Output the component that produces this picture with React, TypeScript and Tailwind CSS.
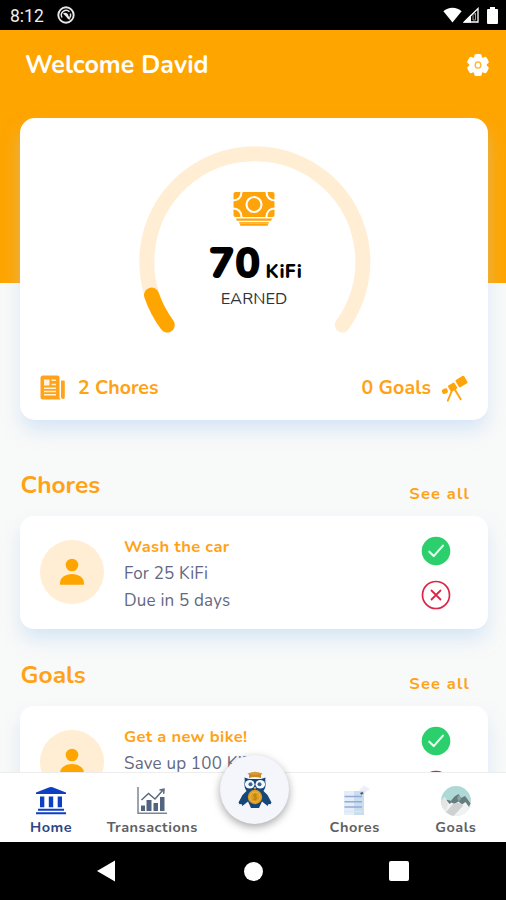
import React from "react";

const CARD_SHADOW = "shadow-[0_11px_18px_-2px_rgba(178,212,244,0.5)]";

function WifiIcon() {
  return (
    <svg width="19" height="16" viewBox="0 0 19 16" fill="#fff">
      <path d="M9.5 15.6 0.4 4.3C2.8 2 6 .8 9.5.8s6.700 1.200 9.100 3.500z" />
    </svg>
  );
}

function SignalIcon() {
  return (
    <svg width="16" height="16" viewBox="0 0 16 16">
      <path d="M1.500 15H15V1.500z" fill="none" stroke="#fff" strokeWidth="1.300" />
      <path d="M0 15.600 8 7.600v8z" fill="#fff" />
      <path d="M10 13V8.500l2.500-2.500v7z" fill="none" stroke="#999" strokeWidth="1" />
    </svg>
  );
}

function BatteryIcon() {
  return (
    <svg width="11" height="17" viewBox="0 0 11 17" fill="#fff">
      <path d="M3 0h5v2h2q1 0 1 1v13q0 1-1 1H1q-1 0-1-1V3q0-1 1-1h2z" />
    </svg>
  );
}

function StatusMark() {
  return (
    <svg width="18" height="18" viewBox="0 0 18 18" fill="none">
      <circle cx="9" cy="9" r="7.700" stroke="#e8e8e8" strokeWidth="1.900" />
      <path d="M5 11.500a4.800 4.800 0 0 1 7.500-5.800M13.400 7.500a4.800 4.800 0 0 1-.8 4.500" stroke="#e8e8e8" strokeWidth="1.500" />
      <path d="M6 7.500c2-1.500 5-.5 5.500 2.500l2 3.500c-3 .5-3.500-2-4.500-3z" fill="#e8e8e8" />
    </svg>
  );
}

function GearIcon() {
  return (
    <svg width="24" height="24" viewBox="0 0 24 24">
      <g fill="#fff">
        <circle cx="12" cy="12" r="8.800" />
        {[0, 60, 120].map((a) => (
          <rect key={a} x="8.200" y="0.900" width="7.600" height="22.200" rx="2.200" transform={`rotate(${a} 12 12)`} />
        ))}
      </g>
      <ellipse cx="12" cy="12" rx="2.800" ry="3.200" fill="none" stroke="#ffb12b" strokeWidth="1.300" />
    </svg>
  );
}

function MoneyIcon() {
  return (
    <svg width="42" height="34" viewBox="0 0 42 34">
      <rect x="0.500" y="0" width="41" height="25" rx="2" fill="#ffa30a" />
      <g fill="none" stroke="#fff" strokeWidth="2.100">
        <circle cx="21" cy="12.500" r="7.500" />
        <path d="M0 8.500c5 0 8.500-3 8.500-8.500M33.500 0c0 5.500 3.500 8.500 8.500 8.500M0 16.500c5 0 8.500 3 8.500 8.500M33.500 25c0-5.500 3.500-8.500 8.500-8.500" />
      </g>
      <path d="M3 26.500h36l-.8 2.200H3.800zM6 30h30l-1.500 3.800h-27z" fill="#ffa30a" />
      <path d="M6 31.100h30" stroke="#ffdc9e" strokeWidth=".7" />
    </svg>
  );
}

function NewsIcon() {
  return (
    <svg width="26" height="26" viewBox="0 0 26 26">
      <path d="M3 .5h14.500q2 0 2 2V22q0 2 1.500 2.500H3q-2.500 0-2.500-2.500V3Q.5.5 3 .5z" fill="#ffa31a" />
      <path d="M21 5.500h2.500q1.300 0 1.300 1.300V22q0 2-1.900 2T21 22z" fill="#ffa31a" />
      <rect x="4" y="4.500" width="5.500" height="6" fill="#fff3df" />
      <path d="M11.500 5.300h4.500M11.500 9.500h4.500M4 13.300h12M4 16.500h12M4 19.800h12" stroke="#fff0d6" strokeWidth="1.400" />
    </svg>
  );
}

function TelescopeIcon() {
  return (
    <svg width="27" height="27" viewBox="0 0 27 27">
      <g fill="#ffa30a">
        <rect x="15.500" y="2.300" width="10" height="8.600" rx="1.500" transform="rotate(-31 20.500 6.600)" />
        <rect x="7.800" y="8.600" width="7.500" height="7" rx="1" transform="rotate(-31 11.500 12.100)" />
        <rect x="1" y="13.700" width="5.800" height="5" rx="2" transform="rotate(-20 3.900 16.200)" />
      </g>
      <path d="M11 15.500 6.800 25.700M13.800 14.500l5.900 9.700" stroke="#ffa30a" strokeWidth="1.900" strokeLinecap="round" />
    </svg>
  );
}

function PersonIcon() {
  return (
    <svg width="26" height="28" viewBox="0 0 26 28" fill="#ffa500">
      <circle cx="13" cy="7" r="6.300" />
      <path d="M1 26.700v-1.500C1 19.500 6.500 16 13 16s12 3.500 12 9.200v1.500z" />
    </svg>
  );
}

function CheckBadge() {
  return (
    <svg width="30" height="30" viewBox="0 0 30 30" fill="none">
      <circle cx="15" cy="15" r="14.300" fill="#2bd06c" />
      <path d="m8.300 15.700 4.400 4.400 9.300-10.500" stroke="#effff5" strokeWidth="2.100" strokeLinecap="round" strokeLinejoin="round" />
    </svg>
  );
}

function CrossBadge() {
  return (
    <svg width="30" height="30" viewBox="0 0 30 30" fill="none" stroke="#dc2648" strokeLinecap="round">
      <circle cx="15" cy="15" r="13.500" strokeWidth="1.700" />
      <path d="m10.500 10.500 9 9m0-9-9 9" strokeWidth="1.800" />
    </svg>
  );
}

function BankIcon() {
  return (
    <svg width="32" height="30" viewBox="0 0 32 30" fill="#0c3fc4">
      <path d="M1 8V6.500L14.500 1.300q1.500-.5 3 0L31 6.500V8z" />
      <path d="M5 10.500h4.300v10.800H5zM13.800 10.500h4.400v10.800h-4.400zM22.700 10.500H27v10.800h-4.300z" />
      <path d="M3 22.800h26v2H3zM1 26.300h30v2H1z" />
    </svg>
  );
}

function ChartIcon() {
  return (
    <svg width="32" height="30" viewBox="0 0 32 30">
      <path d="M2 1v26.200h29" fill="none" stroke="#7b8797" strokeWidth="1.500" />
      <path d="M5 19.500h4v5.500H5zM10.500 14h5v11h-5zM17.500 17H22v8h-4.500zM24 11h4.500v14H24z" fill="#53657e" />
      <path d="m5.500 14 7-6.500 6.500 5.500 8-9M23.500 4l4.500-.8-.3 4.600" fill="none" stroke="#5a6a80" strokeWidth="1.500" />
    </svg>
  );
}

function DocIcon() {
  return (
    <svg width="32" height="32" viewBox="0 0 32 32">
      <path d="m20 5 5-4.500L31 4l-8 6z" fill="#eceffa" />
      <path d="M5 6h10v24H5z" fill="#e4eef8" />
      <path d="M15 6h10v24H15z" fill="#c9ddec" />
      <path d="M5.500 11.500H23M5.500 16.800H23M5.500 22H23" stroke="#94aadc" strokeWidth="1.500" />
      <path d="M5.500 26.500h18" stroke="#dbe6f2" strokeWidth="1.300" />
      <path d="m21 8 2.500-1 1 1.500-2.300 1.300z" fill="#435568" />
    </svg>
  );
}

function MountainIcon() {
  return (
    <svg width="32" height="32" viewBox="0 0 32 32">
      <circle cx="16" cy="16" r="15" fill="#afd9d6" />
      <path d="M1.300 18 4 12l5 4 5-1 3-1 9-1 4.800 4A15 15 0 0 1 16 31C9 31 3 26 1.300 18z" fill="#f1f2f2" />
      <path d="m6 14.500 5 1.200 3.500-4.200 4-2.500 2.500 4 4-2 5.500 7-1.500 4-3.500-5-3.500 2.500-3.500-3-4 2.500-3-1.500-2 1.500z" fill="#647d7f" />
      <path d="m17 13 2.200-3.500L21 14l-2 2.500z" fill="#8fa2a3" />
      <path d="m13 19 4-1.500 5 1.500 1 2-9.500 10q-4-.8-7.500-4z" fill="#cfd0d3" />
      <path d="M1.500 15 5 12.500 8 19l-2 6.500q-5-4.500-4.500-10.500z" fill="#e2e4e5" />
    </svg>
  );
}

function OwlIcon() {
  return (
    <svg width="36" height="40" viewBox="0 0 36 40">
      <path d="M7.500 7.500 12 9h12l4.500-1.500q-.5 3 .2 7-.2 4-2.200 6.500l4 4 4 7.500-1 1.700-2-.2-.8 2-3.200-2.500-2.500-2-3 6.500h-8l-3-6.500-2.500 2-3.200 2.500-.8-2-2 .2-1-1.700 4-7.500 4-4q-2-2.500-2.200-6.500.7-4 .2-7z" fill="#174779" />
      <path d="m10.500 3.500 7.500-1.500 7.500 1.500-1.500 1.300V8q-6-1.800-12 0V4.800z" fill="#c98a26" />
      <path d="M10.500 3.300 18 1.800l7.500 1.500L18 5z" fill="#dc9a32" />
      <ellipse cx="12.700" cy="14.300" rx="4.800" ry="4.300" fill="#f5faff" />
      <ellipse cx="23.300" cy="14.300" rx="4.800" ry="4.300" fill="#f5faff" />
      <circle cx="13.500" cy="14.300" r="2" fill="#3c648f" />
      <circle cx="22.500" cy="14.300" r="2" fill="#3c648f" />
      <path d="m16.500 17 1.500 3 1.500-3z" fill="#efa323" />
      <circle cx="18" cy="27" r="7.200" fill="#dd9c22" />
      <circle cx="18" cy="27" r="5" fill="none" stroke="#f0b840" strokeWidth="1" />
      <path d="M19.800 24.800q-3.600-.8-3.300 1.200c.2 1.300 3.400.7 3.300 2.200s-2.500 1.300-3.600.8M18 23.500v7" fill="none" stroke="#b87a1c" strokeWidth=".9" />
    </svg>
  );
}

function Gauge() {
  return (
    <div className="grid h-[200px] w-[240px] grid-cols-1 grid-rows-1">
      <svg className="col-start-1 row-start-1" width="240" height="200" viewBox="0 1.500 240 200" fill="none" strokeWidth="15" strokeLinecap="round">
        <path d="M33.300 187.500A108 108 0 1 1 208.300 187.500" stroke="#ffeed3" />
        <path d="M17.500 157.500A108 108 0 0 0 33.300 187.500" stroke="#ffa500" />
      </svg>
      <div className="col-start-1 row-start-1 flex flex-col items-center pt-[53px]">
        <MoneyIcon />
        <div className="mt-[13px] flex h-[48px] items-baseline gap-[5px] pl-[3px] text-black">
          <span className="text-[43px] leading-[50px] font-black">70</span>
          <span className="text-[19px] font-extrabold tracking-[0.300px]">KiFi</span>
        </div>
        <span className="mt-[2px] text-[16.500px] leading-[20px] text-[#333]">EARNED</span>
      </div>
    </div>
  );
}

function SectionHead({ title }: { title: string }) {
  return (
    <div className="flex h-[32px] items-start justify-between pr-[18px] pl-[0.500px] text-[#ffa216]">
      <h2 className="pt-[1px] text-[24.500px] leading-[32px] font-bold">{title}</h2>
      <a className="pt-[16px] text-[16.500px] leading-[20px] font-bold tracking-[1.200px]">See all</a>
    </div>
  );
}

function TaskCard({ title, detail, due }: { title: string; detail: string; due?: string }) {
  return (
    <article className={`flex h-[113px] items-start rounded-[14px] bg-white pr-[37px] pl-[20px] ${CARD_SHADOW}`}>
      <div className="mt-[24px] flex size-[64px] items-center justify-center rounded-full bg-[#ffeed3]">
        <PersonIcon />
      </div>
      <div className="ml-[20px] flex-1 pt-[18px] whitespace-nowrap">
        <h3 className="text-[16.500px] leading-[26px] font-bold tracking-[0.350px] text-[#ffa216]">{title}</h3>
        <p className="text-[17px] leading-[27px] tracking-[0.200px] text-[#636882]">{detail}</p>
        {due && <p className="text-[17px] leading-[27px] tracking-[0.200px] text-[#636882]">{due}</p>}
      </div>
      <div className="flex flex-col gap-[14px] pt-[19.500px]">
        <CheckBadge />
        <CrossBadge />
      </div>
    </article>
  );
}

function NavItem({ label, active, children }: { label: string; active?: boolean; children: React.ReactNode }) {
  return (
    <div className="flex flex-col items-center pt-[12px] pl-[1px]">
      <div className="flex h-[32px] items-center">{children}</div>
      <span className={`mt-[1px] text-[14.500px] leading-[18px] font-bold tracking-[0.500px] ${active ? "text-[#2e4683]" : "text-[#606060]"}`}>{label}</span>
    </div>
  );
}

export default function App() {
  return (
    <div className="flex h-[900px] w-[506px] flex-col overflow-hidden bg-[#f8f9f9] font-['Nunito','Lato',sans-serif]">
      <div className="flex h-[30px] shrink-0 items-center bg-black pr-[8px] pl-[10px] text-[#eee]">
        <span className="pt-[2px] font-['Roboto',sans-serif] text-[17.500px] leading-[28px]">8:12</span>
        <span className="ml-[13px]"><StatusMark /></span>
        <div className="ml-auto flex items-center">
          <WifiIcon />
          <span className="ml-[1px]"><SignalIcon /></span>
          <span className="ml-[8px]"><BatteryIcon /></span>
        </div>
      </div>

      <div className="h-[742px] shrink-0 overflow-hidden">
        <header className="flex h-[253px] items-start justify-between bg-[#ffa500] pt-[18px] pr-[16px] pl-[25px] text-white">
          <h1 className="text-[25px] leading-[34px] font-bold tracking-[0.050px]">Welcome David</h1>
          <span className="mt-[5px]"><GearIcon /></span>
        </header>

        <main className="-mt-[165px] pr-[18px] pl-[20px]">
          <section className={`flex h-[302px] flex-col items-center rounded-[15px] bg-white pt-[21px] ${CARD_SHADOW}`}>
            <Gauge />
            <div className="mt-[34px] flex h-[30px] w-full items-center justify-between px-[20px] text-[19.500px] leading-[30px] font-bold text-[#ffa216]">
              <div className="flex items-center gap-[12px]">
                <NewsIcon />
                <span>2 Chores</span>
              </div>
              <div className="flex items-center gap-[10px]">
                <span className="tracking-[0.100px]">0 Goals</span>
                <TelescopeIcon />
              </div>
            </div>
          </section>

          <section className="mt-[48px]">
            <SectionHead title="Chores" />
            <div className="pt-[16px]">
              <TaskCard title="Wash the car" detail="For 25 KiFi" due="Due in 5 days" />
            </div>
          </section>

          <section className="mt-[29px]">
            <SectionHead title="Goals" />
            <div className="pt-[16px]">
              <TaskCard title="Get a new bike!" detail="Save up 100 KiFi" />
            </div>
          </section>
        </main>
      </div>

      <nav className="relative grid h-[70px] shrink-0 grid-cols-5 border-t border-[#ededed] bg-white">
        <NavItem label="Home" active><BankIcon /></NavItem>
        <NavItem label="Transactions"><ChartIcon /></NavItem>
        <div className="flex justify-center">
          <div className="absolute -top-[18px] left-[220px] flex size-[69px] items-center justify-center rounded-full bg-[#f4f6fb] shadow-[0_3px_8px_rgba(0,0,0,0.35)]">
            <OwlIcon />
          </div>
        </div>
        <NavItem label="Chores"><DocIcon /></NavItem>
        <NavItem label="Goals"><MountainIcon /></NavItem>
      </nav>

      <div className="flex h-[58px] shrink-0 items-center justify-between bg-black pr-[97px] pl-[97px]">
        <svg width="18" height="22" viewBox="0 0 18 22"><path d="M0 11 18 .5v21z" fill="#fff" /></svg>
        <div className="ml-[2px] size-[19px] rounded-full bg-white" />
        <div className="size-[20px] rounded-[2px] bg-white" />
      </div>
    </div>
  );
}
